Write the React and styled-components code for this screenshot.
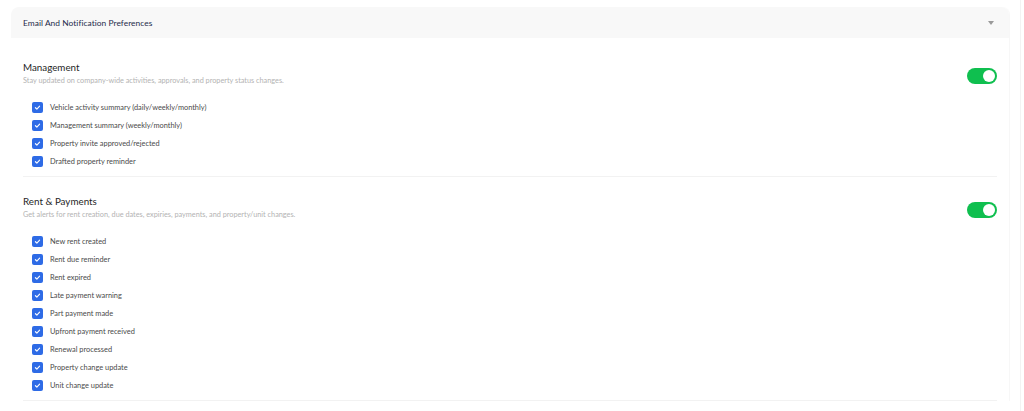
import React from "react";
import styled, { createGlobalStyle } from "styled-components";

const Global = createGlobalStyle`
  html, body { margin: 0; padding: 0; background: #ffffff; }
  body { font-family: Lato, "Open Sans", sans-serif; -webkit-font-smoothing: antialiased; }
  * { box-sizing: border-box; }
`;

const Page = styled.div`
  width: 1021px;
  min-height: 411px;
  padding: 7px 11px 0 11px;
  border-right: 1px solid #f3f3f3;
`;

const Card = styled.div`
  width: 998px;
  background: #fff;
  border-radius: 8px 8px 0 0;
  box-shadow: 1px 0 1px rgba(0, 0, 0, 0.035);
`;

const Header = styled.div`
  height: 31px;
  display: flex;
  align-items: center;
  justify-content: space-between;
  padding: 0 15px 0 12px;
  background: #f8f8f8;
  border-radius: 8px 8px 0 0;
`;

const HeaderTitle = styled.span`
  font-size: 8.4px;
  color: #1e2b4b;
  letter-spacing: 0.05px;
`;

const Caret = styled.span`
  width: 0;
  height: 0;
  border-left: 3px solid transparent;
  border-right: 3px solid transparent;
  border-top: 4px solid #9a9a9a;
  margin-top: 1px;
`;

const Body = styled.div`
  padding: 5px 12px 0 12px;
`;

const Section = styled.section`
  padding: 15px 0 6px;
  border-bottom: 1px solid #f2f2f2;
`;

const SectionHead = styled.div`
  display: flex;
  justify-content: space-between;
  align-items: flex-start;
`;

const HeadText = styled.div`
  display: flex;
  flex-direction: column;
`;

const Title = styled.div`
  font-size: 9.8px;
  line-height: 18px;
  color: #1f1f1f;
`;

const Subtitle = styled.div`
  font-size: 7.3px;
  line-height: 10px;
  color: #b3b3b3;
`;

const Toggle = styled.div`
  width: 30px;
  height: 16px;
  margin-top: 10px;
  border-radius: 8px;
  background: #0fbf4f;
  display: flex;
  align-items: center;
  justify-content: ${(p) => (p.$on ? "flex-end" : "flex-start")};
  padding: 0 2px;
`;

const Knob = styled.span`
  width: 12px;
  height: 12px;
  border-radius: 50%;
  background: #fff;
`;

const List = styled.ul`
  list-style: none;
  margin: 12px 0 0;
  padding: 0 0 0 9px;
`;

const Row = styled.li`
  height: 18px;
  display: flex;
  align-items: center;
  gap: 7px;
`;

const Box = styled.span`
  width: 11px;
  height: 11px;
  border-radius: 2px;
  background: #2e6be6;
  display: flex;
  align-items: center;
  justify-content: center;
  flex: none;
`;

const Label = styled.span`
  font-size: 7.4px;
  color: #4a4a4a;
`;

const Check = () => (
  <svg width="7" height="7" viewBox="0 0 10 10">
    <path d="M2 5.3 L4.1 7.2 L8 3" fill="none" stroke="#fff" strokeWidth="1.6" strokeLinecap="round" strokeLinejoin="round" />
  </svg>
);

const sections = [
  {
    title: "Management",
    subtitle: "Stay updated on company-wide activities, approvals, and property status changes.",
    items: [
      "Vehicle activity summary (daily/weekly/monthly)",
      "Management summary (weekly/monthly)",
      "Property invite approved/rejected",
      "Drafted property reminder",
    ],
  },
  {
    title: "Rent & Payments",
    subtitle: "Get alerts for rent creation, due dates, expiries, payments, and property/unit changes.",
    items: [
      "New rent created",
      "Rent due reminder",
      "Rent expired",
      "Late payment warning",
      "Part payment made",
      "Upfront payment received",
      "Renewal processed",
      "Property change update",
      "Unit change update",
    ],
  },
];

export default function App() {
  return (
    <>
      <Global />
      <Page>
        <Card>
          <Header>
            <HeaderTitle>Email And Notification Preferences</HeaderTitle>
            <Caret />
          </Header>
          <Body>
            {sections.map((s) => (
              <Section key={s.title}>
                <SectionHead>
                  <HeadText>
                    <Title>{s.title}</Title>
                    <Subtitle>{s.subtitle}</Subtitle>
                  </HeadText>
                  <Toggle $on>
                    <Knob />
                  </Toggle>
                </SectionHead>
                <List>
                  {s.items.map((it) => (
                    <Row key={it}>
                      <Box>
                        <Check />
                      </Box>
                      <Label>{it}</Label>
                    </Row>
                  ))}
                </List>
              </Section>
            ))}
          </Body>
        </Card>
      </Page>
    </>
  );
}
